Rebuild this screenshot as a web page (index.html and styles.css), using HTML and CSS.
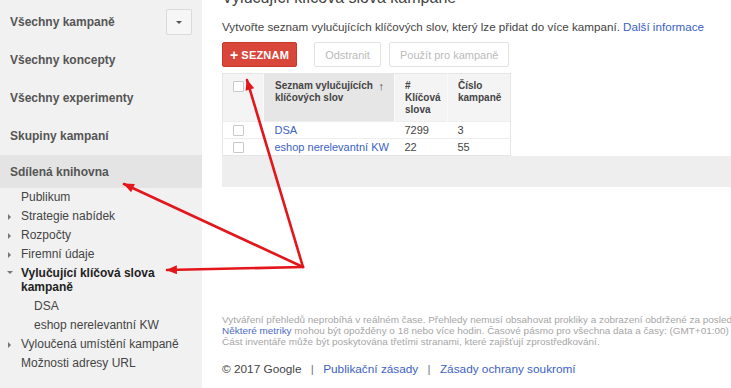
FILE: index.html
```html
<!DOCTYPE html>
<html lang="cs">
<head>
<meta charset="utf-8">
<title>Vylučující klíčová slova kampaně</title>
<link rel="stylesheet" href="styles.css">
</head>
<body>
<div class="page">
  <aside class="sidebar">
    <div class="nav-top nav-first"><span>Všechny kampaně</span><span class="dd"><span class="caret"></span></span></div>
    <div class="nav-top">Všechny koncepty</div>
    <div class="nav-top">Všechny experimenty</div>
    <div class="nav-top">Skupiny kampaní</div>
    <div class="nav-top nav-active">Sdílená knihovna</div>
    <ul class="sub">
      <li class="sub-item">Publikum</li>
      <li class="sub-item tri-right">Strategie nabídek</li>
      <li class="sub-item tri-right">Rozpočty</li>
      <li class="sub-item tri-right">Firemní údaje</li>
      <li class="sub-item tri-down sub-current">Vylučující klíčová slova kampaně</li>
      <li class="sub-item sub-deep">DSA</li>
      <li class="sub-item sub-deep">eshop nerelevantní KW</li>
      <li class="sub-item tri-right">Vyloučená umístění kampaně</li>
      <li class="sub-item">Možnosti adresy URL</li>
    </ul>
  </aside>
  <main class="main">
    <h1 class="title">Vylučující klíčová slova kampaně</h1>
    <p class="desc">Vytvořte seznam vylučujících klíčových slov, který lze přidat do více kampaní. <a class="link" href="#">Další informace</a></p>
    <div class="toolbar">
      <span class="btn btn-red"><span class="plus">+</span> SEZNAM</span>
      <span class="btn btn-off btn-remove">Odstranit</span>
      <span class="btn btn-off">Použít pro kampaně</span>
    </div>
    <table class="grid">
      <thead>
        <tr>
          <th class="c-check"><span class="box"></span></th>
          <th class="c-name sorted"><span class="th-wrap"><span class="th-text">Seznam vylučujících<br>klíčových slov</span><span class="sort">&#8593;</span></span></th>
          <th class="c-count">#<br>Klíčová<br>slova</th>
          <th class="c-camp">Číslo<br>kampaně</th>
        </tr>
      </thead>
      <tbody>
        <tr>
          <td class="c-check"><span class="box"></span></td>
          <td class="c-name"><a class="link" href="#">DSA</a></td>
          <td>7299</td>
          <td>3</td>
        </tr>
        <tr>
          <td class="c-check"><span class="box"></span></td>
          <td class="c-name"><a class="link" href="#">eshop nerelevantní KW</a></td>
          <td>22</td>
          <td>55</td>
        </tr>
      </tbody>
    </table>
    <div class="band"></div>
    <div class="notes">
      <div>Vytváření přehledů neprobíhá v reálném čase. Přehledy nemusí obsahovat prokliky a zobrazení obdržené za posledních 3 hodin.</div>
      <div><span class="note-link">Některé metriky</span> mohou být opožděny o 18 nebo více hodin. Časové pásmo pro všechna data a časy: (GMT+01:00)</div>
      <div>Část inventáře může být poskytována třetími stranami, které zajišťují zprostředkování.</div>
    </div>
    <div class="copy">© 2017 Google <span class="sep">|</span> <a class="link" href="#">Publikační zásady</a> <span class="sep">|</span> <a class="link" href="#">Zásady ochrany soukromí</a></div>
  </main>
</div>
<svg class="arrows" width="731" height="388" viewBox="0 0 731 388" xmlns="http://www.w3.org/2000/svg">
  <defs>
    <marker id="head" viewBox="0 0 12 10" refX="11" refY="5" markerWidth="12" markerHeight="9" markerUnits="userSpaceOnUse" orient="auto">
      <path d="M0 0 L12 5 L0 10 Z" fill="#e3161b"/>
    </marker>
  </defs>
  <g stroke="#e3161b" stroke-width="2.6" fill="none" stroke-linecap="round">
    <line x1="303" y1="267" x2="124" y2="184" marker-end="url(#head)"/>
    <line x1="303" y1="267" x2="167" y2="270" marker-end="url(#head)"/>
    <line x1="303" y1="267" x2="247" y2="80" marker-end="url(#head)"/>
  </g>
</svg>
</body>
</html>
```
FILE: styles.css
```css
* { box-sizing: border-box; }
html, body { margin: 0; padding: 0; }
body {
  font-family: "Liberation Sans", Arial, sans-serif;
  font-size: 12px;
  color: #444;
  background: #fff;
  width: 731px;
  height: 388px;
  overflow: hidden;
  position: relative;
}
.page {
  display: flex;
  height: 388px;
}
.sidebar {
  width: 202px;
  flex: 0 0 202px;
  background: #f1f1f1;
  padding-top: 3px;
}
.nav-top {
  height: 38px;
  display: flex;
  align-items: center;
  justify-content: space-between;
  padding: 0 10px;
  font-weight: bold;
  font-size: 12px;
  color: #555;
}
.nav-active {
  height: 33px;
  background: #e4e4e4;
}
.dd {
  width: 26px;
  height: 26px;
  border: 1px solid #dadada;
  border-radius: 2px;
  background: #f6f6f6;
  display: flex;
  align-items: center;
  justify-content: center;
}
.caret {
  width: 0;
  height: 0;
  border-left: 3px solid transparent;
  border-right: 3px solid transparent;
  border-top: 3px solid #555;
}
.sub {
  list-style: none;
  margin: 0;
  padding: 0;
}
.sub-item {
  position: relative;
  line-height: 19px;
  padding-left: 21px;
  padding-right: 10px;
  color: #444;
  font-size: 12px;
  white-space: nowrap;
}
.tri-right::before {
  content: "";
  position: absolute;
  left: 8px;
  top: 7px;
  border-top: 3px solid transparent;
  border-bottom: 3px solid transparent;
  border-left: 3px solid #777;
}
.tri-down::before {
  content: "";
  position: absolute;
  left: 7px;
  top: 8px;
  border-left: 3px solid transparent;
  border-right: 3px solid transparent;
  border-top: 3px solid #777;
}
.sub-current {
  font-weight: bold;
  color: #222;
  line-height: 14px;
  padding-top: 2px;
  padding-bottom: 3px;
  padding-right: 30px;
  white-space: normal;
}
.sub-current::before { top: 7px; }
.sub-deep { padding-left: 34px; }

.main {
  flex: 1;
  min-width: 0;
  padding-left: 20px;
  overflow: hidden;
}
.title {
  margin: -12px 0 0 0;
  font-size: 16px;
  line-height: 20px;
  font-weight: normal;
  color: #444;
  white-space: nowrap;
}
.desc {
  margin: 12px 0 0 0;
  line-height: 14px;
  font-size: 11.65px;
  color: #444;
  white-space: nowrap;
}
.link {
  color: #3b62c4;
  text-decoration: none;
}
.toolbar {
  display: flex;
  margin-top: 8px;
  height: 25px;
}
.btn {
  display: flex;
  align-items: center;
  justify-content: center;
  height: 25px;
  border-radius: 2px;
  font-size: 11px;
}
.btn-red {
  width: 75px;
  background: #d9473a;
  border: 1px solid #c63a2d;
  color: #fff;
  font-weight: bold;
  letter-spacing: 0.2px;
}
.plus {
  font-size: 14px;
  margin-right: 3px;
  font-weight: bold;
}
.btn-off {
  border: 1px solid #e2e2e2;
  background: #fff;
  color: #bbb;
  padding: 0 10px;
}
.btn-remove {
  margin-left: 17px;
  margin-right: 8px;
  width: 67px;
}
.grid {
  margin-top: 6px;
  border-collapse: collapse;
  border: 1px solid #e6e6e6;
  table-layout: fixed;
  width: 288px;
}
.grid th {
  background: #f4f4f4;
  height: 48px;
  vertical-align: top;
  text-align: left;
  font-size: 10px;
  line-height: 12px;
  font-weight: bold;
  color: #444;
  padding: 6px 10px 0 10px;
  border-left: 1px solid #fafafa;
}
.grid th.sorted { background: #e6e6e6; }
.grid th.c-check { width: 41px; padding-left: 10px; padding-top: 7px; border-left: none; }
.grid th.c-name { width: 131px; padding-left: 11px; }
.grid th.c-count { width: 53px; }
.grid th.c-camp { width: 63px; }
.th-wrap {
  display: flex;
  justify-content: space-between;
}
.th-text { white-space: nowrap; }
.sort { font-size: 11px; margin-left: 4px; }
.grid td {
  height: 17px;
  padding: 0 10px;
  font-size: 11px;
  line-height: 16px;
  color: #444;
  border-top: 1px solid #eeeeee;
  white-space: nowrap;
}
.grid td.c-name { padding-left: 11px; }
.grid td.c-check { padding-left: 10px; }
.box {
  display: block;
  width: 11px;
  height: 11px;
  border: 1px solid #c9c9c9;
  background: #fff;
  border-radius: 1px;
}
.band {
  height: 31px;
  background: #eeeeee;
}
.notes {
  margin-top: 127px;
  font-size: 9.95px;
  line-height: 11px;
  color: #a6a6a6;
  white-space: nowrap;
}
.note-link { color: #4a6cc4; }
.copy {
  margin-top: 14px;
  font-size: 11.8px;
  line-height: 16px;
  color: #444;
  white-space: nowrap;
}
.sep {
  color: #777;
  margin: 0 6px;
}
.arrows {
  position: absolute;
  left: 0;
  top: 0;
  pointer-events: none;
}
```
